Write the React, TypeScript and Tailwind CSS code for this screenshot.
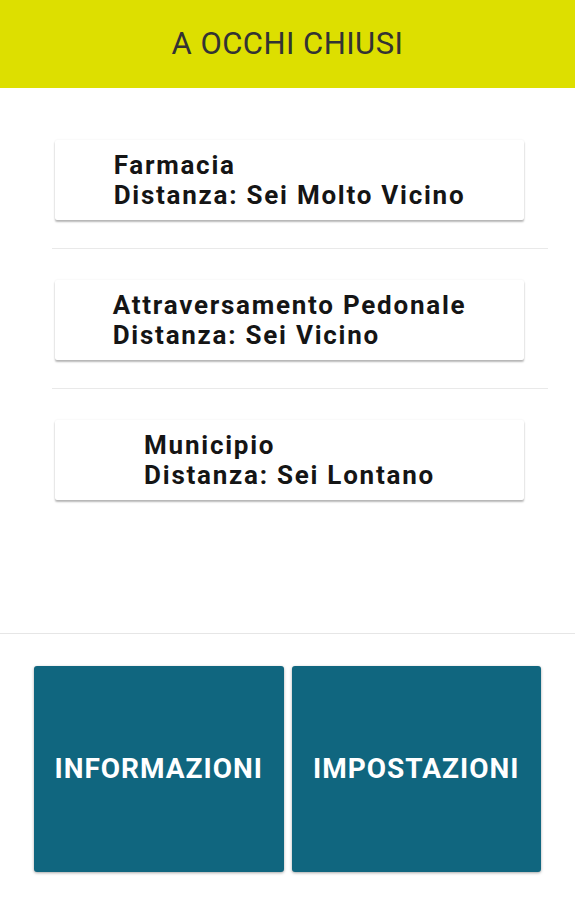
import React from 'react';

const places = [
  { name: 'Farmacia', distance: 'Sei Molto Vicino' },
  { name: 'Attraversamento Pedonale', distance: 'Sei Vicino' },
  { name: 'Municipio', distance: 'Sei Lontano' },
];

const App: React.FC = () => {
  return (
    <div className="min-h-[900px] bg-white font-['Roboto',sans-serif] flex flex-col">
      <header className="h-[88px] bg-[#dddf00] flex items-center justify-center">
        <h1 className="text-[31px] leading-[30px] text-[#333333] tracking-[0.45px]">A OCCHI CHIUSI</h1>
      </header>

      <div className="h-[545px] pt-[21px]">
        <ul className="ml-[52px] mr-[27px]">
          {places.map((p, i) => (
            <li
              key={p.name}
              className={i < places.length - 1 ? 'pt-[31px] pb-[28px] border-b border-[#e9e9e9]' : 'pt-[31px] pb-[28px]'}
            >
              <div className="ml-[3px] w-[469px] rounded-[2px] bg-white py-[10px] flex justify-center shadow-[0_2px_2px_rgba(0,0,0,0.28),0_0_2px_rgba(0,0,0,0.08)]">
                <div className="text-left text-[26px] leading-[30px] font-bold tracking-[1.75px] text-[#151515]">
                  <div>{p.name}</div>
                  <div>Distanza: {p.distance}</div>
                </div>
              </div>
            </li>
          ))}
        </ul>
      </div>

      <div className="border-t border-[#e6e6e6] pt-[32px] px-[34px] flex gap-[8px]">
        <button className="w-[250px] h-[206px] rounded-[3px] bg-[#10667f] text-white text-[28px] font-bold tracking-[1px] shadow-[0_1px_3px_rgba(0,0,0,0.35)]">
          INFORMAZIONI
        </button>
        <button className="w-[250px] h-[206px] rounded-[3px] bg-[#10667f] text-white text-[28px] font-bold tracking-[1px] shadow-[0_1px_3px_rgba(0,0,0,0.35)]">
          IMPOSTAZIONI
        </button>
      </div>
    </div>
  );
};

export default App;
